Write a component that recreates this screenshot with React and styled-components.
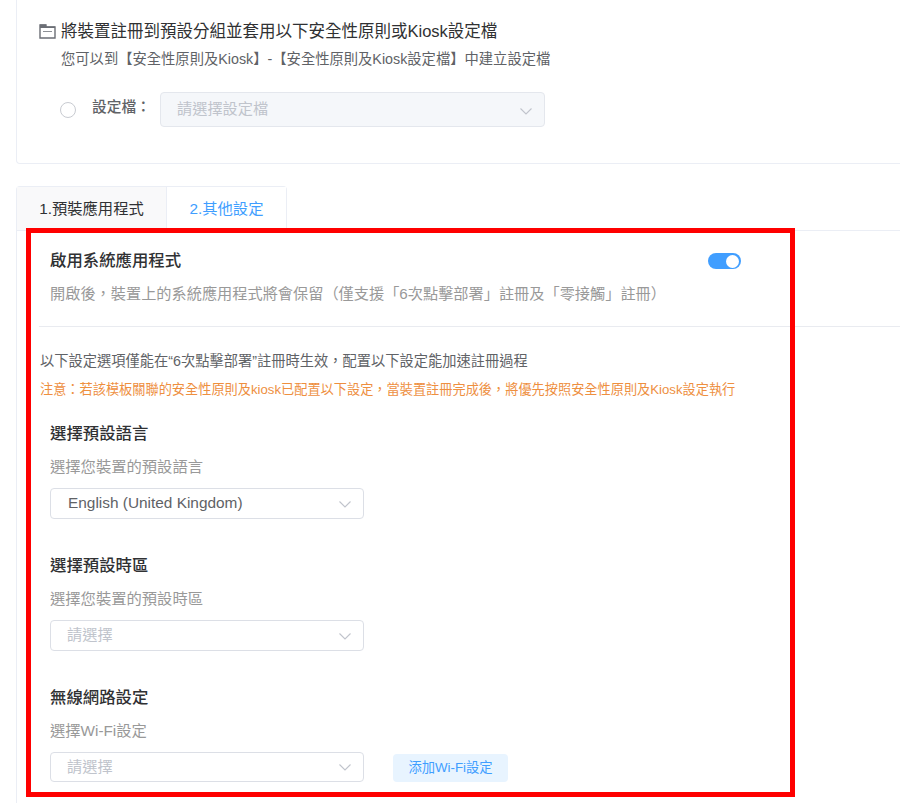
import React from "react";
import styled, { createGlobalStyle } from "styled-components";

const GlobalStyle = createGlobalStyle`
  html, body {
    margin: 0;
    padding: 0;
    background: #fff;
    overflow: hidden;
  }
  body {
    font-family: "Liberation Sans", "Noto Sans CJK TC", sans-serif;
    color: #303133;
  }
`;

const Page = styled.div`
  position: relative;
  width: 900px;
  height: 803px;
  overflow: hidden;
  padding-left: 16px;
  box-sizing: border-box;
`;

const Card = styled.section`
  width: 1000px;
  height: 164px;
  box-sizing: border-box;
  border: 1px solid #ebeef5;
  border-top: none;
  border-radius: 0 0 4px 4px;
  padding: 20px 0 0 22px;
`;

const CardTitle = styled.div`
  display: flex;
  align-items: center;
  gap: 5px;
  height: 22px;
  font-size: 16.5px;
  line-height: 22px;
  color: #303133;
`;

const CardHint = styled.p`
  margin: 6px 0 0 22px;
  font-size: 14.3px;
  line-height: 22px;
  color: #606266;
`;

const ProfileRow = styled.div`
  display: flex;
  align-items: center;
  margin: 22px 0 0 21px;
`;

const Radio = styled.span`
  width: 16px;
  height: 16px;
  box-sizing: border-box;
  border: 1px solid #c8cbd1;
  border-radius: 50%;
  background: #fff;
`;

const ProfileLabel = styled.label`
  width: 68px;
  margin: 0 0 8px 16px;
  font-size: 14.7px;
  font-weight: 500;
  color: #606266;
  white-space: nowrap;
`;

const Select = styled.div`
  display: flex;
  align-items: center;
  justify-content: space-between;
  width: ${(p) => p.$width || 314}px;
  height: ${(p) => p.$height || 31}px;
  box-sizing: border-box;
  padding: 0 12px 0 17px;
  border: 1px solid ${(p) => (p.$disabled ? "#e4e7ed" : "#dcdfe6")};
  border-radius: 4px;
  background: ${(p) => (p.$disabled ? "#f5f7fa" : "#fff")};
  font-size: 15.2px;
  color: ${(p) => (p.$placeholder ? "#c0c4cc" : "#606266")};
  svg {
    margin-top: ${(p) => (p.$disabled ? 3 : 1)}px;
  }
`;

const SelectText = styled.span`
  margin-left: ${(p) => (p.$placeholder ? -1 : 0)}px;
  margin-bottom: ${(p) => (p.$placeholder ? 5 : 2)}px;
  font-size: ${(p) => (p.$placeholder ? 15.2 : 15.4)}px;
`;

const Tabs = styled.div`
  display: flex;
  margin-top: 22px;
  width: 271px;
  height: 44px;
  box-sizing: border-box;
  border: 1px solid #ebeef5;
  border-bottom: none;
  border-radius: 4px 4px 0 0;
`;

const Tab = styled.div`
  flex: ${(p) => (p.$active ? "0 0 149px" : "1")};
  display: flex;
  align-items: center;
  justify-content: center;
  padding-bottom: 3px;
  background: ${(p) => (p.$active ? "#f9f9fa" : "#fff")};
  border-right: ${(p) => (p.$active ? "1px solid #ebeef5" : "none")};
  color: ${(p) => (p.$active ? "#303133" : "#409eff")};
  font-size: 15.3px;
`;

const Panel = styled.div`
  width: 1000px;
  height: 700px;
  box-sizing: border-box;
  border-top: 1px solid #ebeef5;
  border-left: 1px solid #ebeef5;
  padding: 0 0 0 22px;
`;

const SwitchBlock = styled.div`
  height: 96px;
  box-sizing: border-box;
  padding: 18px 0 0 11px;
  border-bottom: 1px solid #e9ebf0;
`;

const SwitchHead = styled.div`
  display: flex;
  align-items: center;
  justify-content: space-between;
  width: 691px;
  height: 24px;
`;

const SectionTitle = styled.h3`
  margin: 0;
  padding-bottom: ${(p) => p.$lift || 0}px;
  font-size: 16.4px;
  line-height: 24px;
  font-weight: 500;
  color: #303133;
`;

const Toggle = styled.span`
  display: flex;
  align-items: center;
  justify-content: flex-end;
  width: 33px;
  height: 16px;
  box-sizing: border-box;
  padding-right: 2px;
  border-radius: 8px;
  background: #409eff;
`;

const ToggleKnob = styled.span`
  width: 13px;
  height: 13px;
  border-radius: 50%;
  background: #fff;
`;

const Muted = styled.p`
  margin: ${(p) => p.$top || 10}px 0 0;
  font-size: ${(p) => p.$size || 15.3}px;
  line-height: 24px;
  color: #999;
`;

const Notice = styled.p`
  margin: 24px 0 0 1px;
  font-size: 14.25px;
  line-height: 20px;
  color: #606266;
`;

const Warning = styled.p`
  margin: 9px 0 0 1px;
  font-size: 13.2px;
  line-height: 20px;
  color: #ee8f3f;
`;

const SectionList = styled.div`
  margin-top: 21px;
`;

const Section = styled.div`
  height: 132px;
  padding-left: 11px;
  box-sizing: border-box;
`;

const SelectRow = styled.div`
  display: flex;
  align-items: center;
  gap: 29px;
  margin-top: 9px;
`;

const AddButton = styled.button`
  width: 115px;
  height: 28px;
  padding: 0 0 3px;
  border: none;
  border-radius: 4px;
  background: #e8f4ff;
  color: #409eff;
  font-family: inherit;
  font-size: 13.3px;
  margin-top: 2px;
`;

const Highlight = styled.div`
  position: absolute;
  left: 26px;
  top: 228px;
  width: 769px;
  height: 569px;
  box-sizing: border-box;
  border: 5px solid #ff0000;
  pointer-events: none;
`;

const Chevron = () => (
  <svg width="12" height="7" viewBox="0 0 12 7" fill="none">
    <polyline points="0.5,0.5 6,6 11.5,0.5" stroke="#c0c4cc" strokeWidth="1.1" />
  </svg>
);

const FolderIcon = () => (
  <svg width="17" height="16" viewBox="0 0 17 16" fill="none">
    <path d="M1 2H7V4H16V15H1Z" stroke="#6b6e75" strokeWidth="1.4" />
    <path d="M1 1.5H7V3.5H16V5H1Z" fill="#6b6e75" />
    <path d="M4 8.5H13" stroke="#8d9096" />
  </svg>
);

const sections = [
  {
    title: "選擇預設語言",
    hint: "選擇您裝置的預設語言",
    value: "English (United Kingdom)",
  },
  { title: "選擇預設時區", hint: "選擇您裝置的預設時區" },
  { title: "無線網路設定", hint: "選擇Wi-Fi設定", wifi: true },
];

export default function App() {
  return (
    <>
      <GlobalStyle />
      <Page>
        <Card>
          <CardTitle>
            <FolderIcon />
            將裝置註冊到預設分組並套用以下安全性原則或Kiosk設定檔
          </CardTitle>
          <CardHint>
            您可以到【安全性原則及Kiosk】-【安全性原則及Kiosk設定檔】中建立設定檔
          </CardHint>
          <ProfileRow>
            <Radio />
            <ProfileLabel>設定檔：</ProfileLabel>
            <Select $width={385} $height={35} $disabled $placeholder>
              <SelectText $placeholder>請選擇設定檔</SelectText>
              <Chevron />
            </Select>
          </ProfileRow>
        </Card>

        <Tabs>
          <Tab $active>1.預裝應用程式</Tab>
          <Tab>2.其他設定</Tab>
        </Tabs>

        <Panel>
          <SwitchBlock>
            <SwitchHead>
              <SectionTitle $lift={2}>啟用系統應用程式</SectionTitle>
              <Toggle>
                <ToggleKnob />
              </Toggle>
            </SwitchHead>
            <Muted $top={9} $size={15.2}>
              開啟後，裝置上的系統應用程式將會保留（僅支援「6次點擊部署」註冊及「零接觸」註冊）
            </Muted>
          </SwitchBlock>

          <Notice>以下設定選項僅能在“6次點擊部署”註冊時生效，配置以下設定能加速註冊過程</Notice>
          <Warning>
            注意：若該模板關聯的安全性原則及kiosk已配置以下設定，當裝置註冊完成後，將優先按照安全性原則及Kiosk設定執行
          </Warning>

          <SectionList>
            {sections.map((s) => (
              <Section key={s.title}>
                <SectionTitle>{s.title}</SectionTitle>
                <Muted>{s.hint}</Muted>
                <SelectRow>
                  <Select $placeholder={!s.value} $height={s.wifi ? 30 : 31}>
                    <SelectText $placeholder={!s.value}>{s.value || "請選擇"}</SelectText>
                    <Chevron />
                  </Select>
                  {s.wifi && <AddButton>添加Wi-Fi設定</AddButton>}
                </SelectRow>
              </Section>
            ))}
          </SectionList>
        </Panel>
        <Highlight />
      </Page>
    </>
  );
}
